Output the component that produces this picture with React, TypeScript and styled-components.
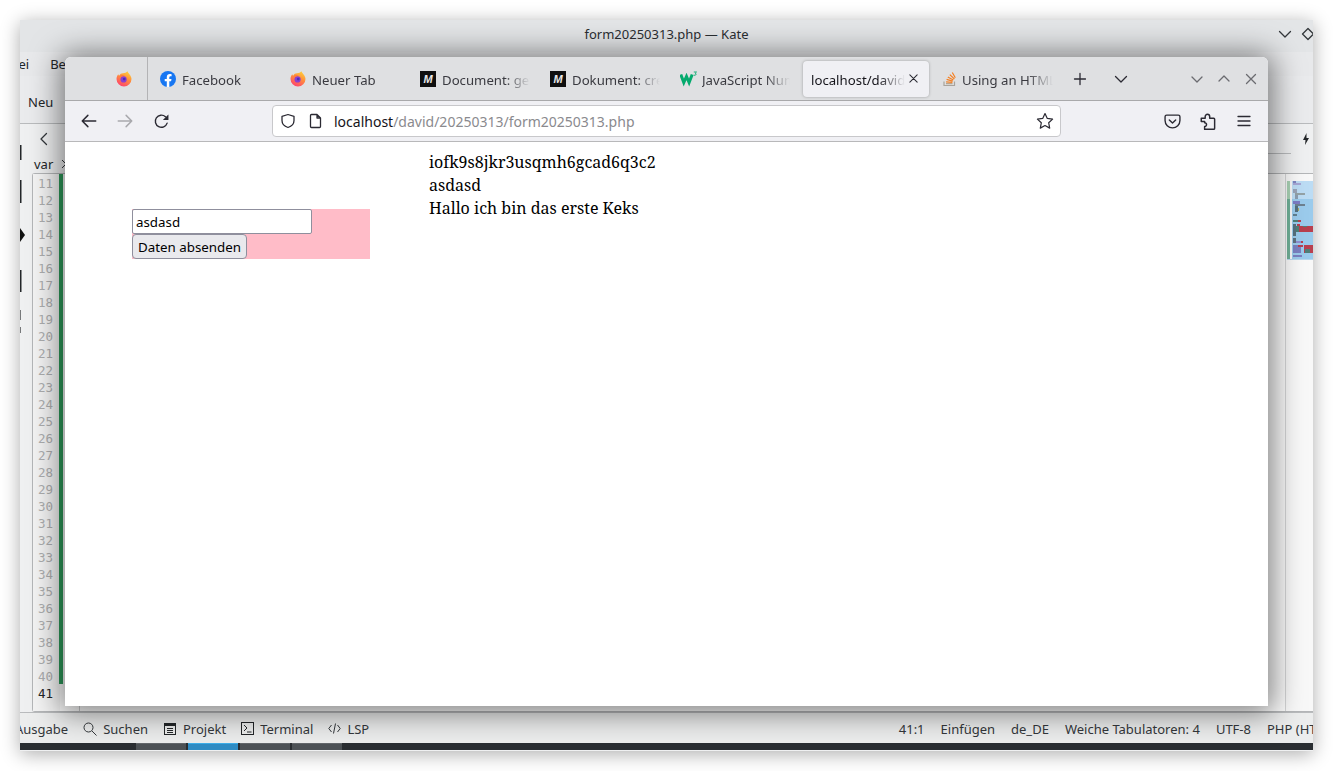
import React from 'react';
import styled, { createGlobalStyle } from 'styled-components';

const GlobalStyle = createGlobalStyle`
  html, body {
    margin: 0;
    padding: 0;
    background: #ffffff;
  }
  * {
    box-sizing: border-box;
  }
`;

// Desktop holds two free floating windows
const Desktop = styled.div`
  position: relative;
  width: 1333px;
  height: 771px;
  overflow: hidden;
  background: #ffffff;
  font-family: 'Noto Sans', 'Open Sans', sans-serif;
`;

const KateWindow = styled.div`
  position: absolute;
  left: 20px;
  top: 20px;
  width: 1293px;
  height: 731px;
  display: flex;
  flex-direction: column;
  overflow: hidden;
  background: #eff0f1;
  color: #232629;
  font-size: 13px;
  box-shadow: 0 3px 18px rgba(0, 0, 0, 0.33);
`;

const KateTitleBar = styled.div`
  position: relative;
  flex: 0 0 32px;
  display: flex;
  align-items: center;
  justify-content: center;
  padding-bottom: 4px;
  background: #e3e5e7;
  color: #2a2e32;
`;

const KateControls = styled.div`
  position: absolute;
  right: -3px;
  top: 6px;
  display: flex;
  gap: 7px;
  align-items: center;
`;

const KateMenu = styled.div`
  flex: 0 0 24px;
  display: flex;
  align-items: center;
  gap: 21px;
  margin-left: -23px;
  background: #e8e9eb;
  white-space: nowrap;
`;

const KateToolbar = styled.div`
  flex: 0 0 48px;
  display: flex;
  align-items: center;
  padding: 4px 0 0 8px;
  background: #eaebed;
  border-bottom: 1px solid #b9bbbd;
`;

const KateTabStrip = styled.div`
  flex: 0 0 30px;
  display: flex;
  align-items: center;
  justify-content: space-between;
  padding: 0 3px 0 16px;
  border-bottom: 1px solid transparent;
  position: relative;
`;

const StripLine = styled.div`
  position: absolute;
  right: 22px;
  bottom: -1px;
  width: 30px;
  height: 1px;
  background: #b9bbbd;
`;

const Crumbs = styled.div`
  flex: 0 0 19px;
  display: flex;
  align-items: center;
  gap: 8px;
  padding-left: 14px;
  font-size: 13px;
`;

const EditorFrame = styled.div`
  flex: 0 0 539px;
  display: flex;
  margin-left: 12px;
  border: 1px solid #b4b6b8;
  border-right: none;
  border-radius: 3px 0 0 3px;
  background: #fcfcfc;
`;

const Gutter = styled.div`
  width: 27px;
  padding-top: 1px;
  background: #f4f4f4;
  font-family: 'DejaVu Sans Mono', 'Liberation Mono', monospace;
  font-size: 12.5px;
`;

const LineNo = styled.div<{ $current?: boolean }>`
  height: 17px;
  line-height: 17px;
  padding-left: 5px;
  color: ${({ $current }) => ($current ? '#232629' : '#adaeaf')};
`;

const ChangeBar = styled.div`
  width: 4px;
  height: 510px;
  margin-left: -1px;
  background: #2e9a5a;
`;

const CodeArea = styled.div`
  flex: 1;
  margin-left: 16px;
  border-left: 1px solid #c9cacb;
`;

const MiniMap = styled.div`
  width: 28px;
  border-left: 1px solid #d4d5d6;
  padding: 7px 0 0 1px;
  background: #f8f8f8;
`;

const KateStatus = styled.div`
  flex: 0 0 31px;
  display: flex;
  align-items: center;
  overflow: hidden;
  padding-top: 1px;
  border-top: 1px solid #b9bbbd;
  background: #eceded;
  white-space: nowrap;
`;

const StatusButton = styled.div`
  display: flex;
  align-items: center;
  gap: 6px;
  margin-right: 15px;
  color: #33373b;
`;

const StatusStart = styled.div`
  display: flex;
  align-items: center;
  margin-left: -5px;
`;

const StatusEnd = styled.div`
  display: flex;
  align-items: center;
  gap: 16px;
  margin-left: auto;
  margin-right: -26px;
  color: #33373b;
`;

const TaskStrip = styled.div`
  flex: 0 0 7px;
  display: flex;
  gap: 2px;
  padding-left: 116px;
  background: #2a2e32;
`;

const TaskItem = styled.div<{ $active?: boolean }>`
  width: 50px;
  background: ${({ $active }) => ($active ? '#2f8cc4' : '#4d5256')};
  border-top: 1px solid ${({ $active }) => ($active ? '#3daee9' : '#63676b')};
`;

const SideMarks = styled.svg`
  position: absolute;
  left: 0;
  top: 125px;
`;

const BrowserWindow = styled.div`
  position: absolute;
  left: 65px;
  top: 57px;
  width: 1203px;
  height: 649px;
  display: flex;
  flex-direction: column;
  overflow: hidden;
  border-radius: 6px 6px 0 0;
  background: #ffffff;
  box-shadow: 0 2px 30px 5px rgba(0, 0, 0, 0.5);
`;

const TabBar = styled.div`
  flex: 0 0 44px;
  display: flex;
  align-items: center;
  background: #dfe0e2;
  border-bottom: 1px solid #a9a9ab;
`;

const PinnedTab = styled.div`
  width: 83px;
  height: 43px;
  display: flex;
  align-items: center;
  justify-content: flex-end;
  padding-right: 15px;
  border-right: 1px solid #b3b3b5;
  margin-right: 2px;
`;

const Tab = styled.div<{ $active?: boolean }>`
  width: ${({ $active }) => ($active ? '126px' : '130px')};
  height: 36px;
  margin: ${({ $active }) => ($active ? '0 4px 0 3px' : '0')};
  padding: ${({ $active }) => ($active ? '0 9px 0 8px' : '0 10px')};
  display: flex;
  align-items: center;
  gap: ${({ $active }) => ($active ? '2px' : '6px')};
  font-size: 13.2px;
  color: ${({ $active }) => ($active ? '#15141a' : '#3a3a40')};
  background: ${({ $active }) => ($active ? '#f0f0f4' : 'transparent')};
  border-radius: 4px;
  box-shadow: ${({ $active }) => ($active ? '0 0 3px rgba(0, 0, 0, 0.3)' : 'none')};
`;

const TabTitle = styled.span`
  flex: 1;
  padding-top: 2px;
  overflow: hidden;
  white-space: nowrap;
  mask-image: linear-gradient(to right, #000 72%, transparent 100%);
`;

const MediumIcon = styled.span`
  flex: 0 0 16px;
  height: 16px;
  display: flex;
  align-items: center;
  justify-content: center;
  background: #101010;
  color: #e8e8e8;
  font-family: 'Liberation Sans', sans-serif;
  font-size: 11px;
  font-weight: 700;
  font-style: italic;
`;

const TabBarButton = styled.div<{ $gap?: number }>`
  width: 34px;
  height: 34px;
  margin-left: ${({ $gap }) => $gap ?? 0}px;
  display: flex;
  align-items: center;
  justify-content: center;
`;

const WindowControls = styled.div`
  margin-left: auto;
  padding-right: 4px;
  display: flex;
`;

const WindowButton = styled.div`
  width: 27px;
  display: flex;
  justify-content: center;
`;

const NavBar = styled.div`
  flex: 0 0 41px;
  display: flex;
  align-items: center;
  padding: 0 6px;
  background: #f0f0f4;
  border-bottom: 1px solid #b8b8ba;
`;

const NavButton = styled.div`
  width: 36px;
  height: 32px;
  display: flex;
  align-items: center;
  justify-content: center;
`;

const UrlBar = styled.div`
  flex: 1;
  height: 32px;
  margin: 0 93px;
  padding: 0 6px 0 7px;
  display: flex;
  align-items: center;
  background: #ffffff;
  border: 1px solid #c8c8cb;
  border-radius: 4px;
  font-size: 14px;
  color: #15141a;
`;

const UrlIconGap = styled.span`
  width: 12px;
`;

const UrlText = styled.span`
  flex: 1;
  margin-left: 10px;
`;

const UrlPath = styled.span`
  color: #8a8a8e;
`;

const PageBody = styled.div`
  flex: 1;
  display: flex;
  align-items: flex-start;
  padding-left: 67px;
  gap: 59px;
  color: #000000;
`;

const LoginForm = styled.form`
  width: 238px;
  height: 50px;
  margin-top: 67px;
  display: flex;
  flex-direction: column;
  align-items: flex-start;
  background: #ffbcc8;
`;

const NameInput = styled.input`
  width: 180px;
  height: 25px;
  padding: 0 3px;
  border: 1px solid #8f8f9d;
  border-radius: 2px;
  background: #ffffff;
  color: #000000;
  font-family: 'Noto Sans', sans-serif;
  font-size: 13.33px;
  outline: none;
`;

const SubmitButton = styled.button`
  width: 115px;
  height: 25px;
  padding: 0;
  border: 1px solid #8f8f9d;
  border-radius: 4px;
  background: #e9e9ed;
  color: #000000;
  font-family: 'Noto Sans', sans-serif;
  font-size: 13.33px;
`;

const Output = styled.div`
  padding-top: 9px;
  font-family: 'Noto Serif', 'DejaVu Serif', serif;
  font-size: 16px;
  line-height: 23px;
`;

const FirefoxIcon = () => (
  <svg width="16" height="16" viewBox="0 0 16 16" style={{ flex: '0 0 16px' }}>
    <defs>
      <linearGradient id="ffx" x1="0.8" y1="0" x2="0.3" y2="1">
        <stop offset="0" stopColor="#ffd23a" />
        <stop offset="0.45" stopColor="#ff8f3c" />
        <stop offset="1" stopColor="#ff4070" />
      </linearGradient>
    </defs>
    <path d="M11.500 .3c.2 1.300 1.100 1.800 2.100 3.200 1 1.400 1.900 2.800 1.900 4.500a7.500 7.500 0 0 1-15 0c0-1.800.7-3.500 1.800-4.700.1.700.4 1.100.8 1.400C4 3 5.400 2.200 7 2.200c1.700 0 3.500-.6 4.500-1.900z" fill="url(#ffx)" />
    <circle cx="7.600" cy="8.400" r="3.100" fill="#8a3fd0" />
    <circle cx="8.200" cy="8.100" r="1.400" fill="#4a30b8" />
    <path d="M3.500 5c1.500-.8 3.800-1.300 5.500-.5-1.800 0-3 .6-3.700 1.800z" fill="#ff7a3c" />
  </svg>
);

const FacebookIcon = () => (
  <svg width="16" height="16" viewBox="0 0 16 16" style={{ flex: '0 0 16px' }}>
    <circle cx="8" cy="8" r="8" fill="#1877f2" />
    <path d="M11.100 10.300l.4-2.300H9.300V6.500c0-.6.300-1.200 1.300-1.200h1V3.300s-.9-.2-1.800-.2C8 3.100 6.800 4.300 6.800 6.300V8H4.700v2.300h2.100V16h2.500v-5.700z" fill="#ffffff" />
  </svg>
);

const W3Icon = () => (
  <svg width="18" height="16" viewBox="0 0 18 16" style={{ flex: '0 0 18px', marginRight: -2 }}>
    <path d="M.8 3.500l3 8 2.700-6 2.600 6 3.100-8" fill="none" stroke="#04aa6d" strokeWidth="3" />
    <path d="M13.800 1h2.700l-1.300 1.300c1 0 1.300 1.700-.2 2l-1.200-.2" fill="none" stroke="#04aa6d" strokeWidth=".9" />
  </svg>
);

const StackIcon = () => (
  <svg width="13" height="16" viewBox="1 0 13 16" style={{ flex: '0 0 13px' }}>
    <path d="M2 10.500v4h10.500v-4" fill="none" stroke="#a8a39c" strokeWidth="1.200" />
    <path d="M4 12.700h6.500" stroke="#b9a48a" strokeWidth="1.200" />
    <path d="M4.100 10.800l6.300.6M4.600 8.400l6.100 1.800M5.800 5.900l5.500 3.100M7.800 3.600l4.600 4.400M10.300 1.500l3 5.300" stroke="#f48024" strokeWidth="1.200" fill="none" />
  </svg>
);

type GlyphProps = { size?: number; color?: string; children: React.ReactNode };

const Glyph = ({ size = 16, color = '#2b2a33', children }: GlyphProps) => (
  <svg width={size} height={size} viewBox="0 0 16 16" fill="none" stroke={color} strokeWidth="1.300" strokeLinecap="round" strokeLinejoin="round" style={{ flex: `0 0 ${size}px` }}>
    {children}
  </svg>
);

const CloseGlyph = ({ color, size = 16 }: { color?: string; size?: number }) => (
  <Glyph size={size} color={color}>
    <path d="M3.500 3.500l9 9M12.500 3.500l-9 9" />
  </Glyph>
);

// x, y, width, height, fill of the code blocks in the minimap
const minimapRows: [number, number, number, number, string][] = [
  [6, 0, 3, 2, '#7f86c0'], [6, 2, 8, 2, '#a6a6d4'], [6, 8, 4, 4, '#9aa4b8'], [8, 12, 10, 2, '#94a2a6'],
  [8, 14, 3, 4, '#8c9db0'], [6, 20, 7, 3, '#7c7cc4'], [8, 23, 10, 2, '#6d8090'], [8, 25, 3, 6, '#55707e'],
  [11, 27, 1, 3, '#a9a860'], [6, 33, 4, 2, '#5f7f90'], [6, 39, 5, 2, '#4f8078'], [11, 39, 3, 2, '#b8404f'],
  [6, 43, 3, 12, '#55707e'], [10, 43, 3, 2, '#b8404f'], [9, 45, 3, 6, '#4f8078'], [12, 45, 15, 6, '#b8404f'],
  [16, 45, 4, 1, '#4f8078'], [6, 57, 3, 5, '#5f7080'], [9, 60, 5, 2, '#8f8fd0'], [14, 60, 2, 2, '#b8404f'],
  [6, 64, 5, 2, '#7a80c0'], [11, 64, 5, 2, '#b8404f'], [6, 66, 8, 6, '#7a80c0'], [17, 64, 10, 8, '#b8404f'],
  [18, 68, 5, 4, '#4f8078'], [6, 74, 9, 2, '#7a80c0'],
];

const lineNumbers = Array.from({ length: 31 }, (_, i) => i + 11);

const tabs = [
  { title: 'Facebook', icon: <FacebookIcon /> },
  { title: 'Neuer Tab', icon: <FirefoxIcon /> },
  { title: 'Document: getElementById', icon: <MediumIcon>M</MediumIcon> },
  { title: 'Dokument: createElement', icon: <MediumIcon>M</MediumIcon> },
  { title: 'JavaScript Number', icon: <W3Icon /> },
];

const App = () => {
  return (
    <Desktop>
      <GlobalStyle />
      <KateWindow>
        <KateTitleBar>
          form20250313.php — Kate
          <KateControls>
            <Glyph color="#33373b"><path d="M2.500 5.500L8 11l5.500-5.500" /></Glyph>
            <Glyph color="#33373b"><path d="M8 2.500L13.500 8 8 13.500 2.500 8z" /></Glyph>
          </KateControls>
        </KateTitleBar>
        <KateMenu>
          <span>Datei</span>
          <span>Bearbeiten</span>
        </KateMenu>
        <KateToolbar>Neu</KateToolbar>
        <KateTabStrip>
          <Glyph color="#33373b"><path d="M10.500 2.500L5 8l5.500 5.500" /></Glyph>
          <svg width="8" height="12" viewBox="0 0 8 12"><path d="M4.500 0L1 7h2.500L3 12l4-7H4.500z" fill="#232629" /></svg>
          <StripLine />
        </KateTabStrip>
        <Crumbs>
          var
          <svg width="6" height="10" viewBox="0 0 6 10"><path d="M1 1l4 4-4 4" fill="none" stroke="#33373b" /></svg>
        </Crumbs>
        <EditorFrame>
          <Gutter>
            {lineNumbers.map((n) => (
              <LineNo key={n} $current={n === 41}>{n}</LineNo>
            ))}
          </Gutter>
          <ChangeBar />
          <CodeArea />
          <MiniMap>
            <svg width="27" height="81" viewBox="0 0 27 81">
              <rect x="0" y="0" width="3" height="18" fill="#a7cfb2" />
              <rect x="0" y="18" width="3" height="60" fill="#6fae96" />
              <rect x="5" y="0" width="22" height="18" fill="#bcdcf4" />
              <rect x="5" y="18" width="22" height="60" fill="#9bcbec" />
              <path d="M0 78.500h27" stroke="#b8d8ee" />
              {minimapRows.map(([x, y, w, h, fill]) => (
                <rect key={`${x}-${y}`} x={x} y={y} width={w} height={h} fill={fill} />
              ))}
            </svg>
          </MiniMap>
        </EditorFrame>
        <KateStatus>
          <StatusStart>
            <StatusButton>Ausgabe</StatusButton>
            <StatusButton>
              <svg width="14" height="14" viewBox="0 0 14 14" fill="none" stroke="#33373b"><circle cx="5.500" cy="5.500" r="4.500" /><path d="M9 9l4.500 4.500" /></svg>
              Suchen
            </StatusButton>
            <StatusButton>
              <svg width="14" height="14" viewBox="0 0 14 14" fill="none" stroke="#232629"><rect x="1.500" y="1.500" width="11" height="11" /><path d="M1.500 3h11" strokeWidth="2" /><path d="M4 6.500h6M4 8.500h6M4 10.500h6" /></svg>
              Projekt
            </StatusButton>
            <StatusButton>
              <svg width="13" height="13" viewBox="0 0 13 13" fill="none" stroke="#232629"><rect x=".5" y=".5" width="12" height="12" /><path d="M3 3l3 3-3 3M6 10h4.500" /></svg>
              Terminal
            </StatusButton>
            <StatusButton>
              <svg width="13" height="13" viewBox="0 0 13 13" fill="none" stroke="#33373b"><path d="M3.500 3L.8 6.500 3.500 10M9.500 3l2.700 3.500L9.500 10M7.500 1.500l-2 10" /></svg>
              LSP
            </StatusButton>
          </StatusStart>
          <StatusEnd>
            <span>41:1</span>
            <span>Einfügen</span>
            <span>de_DE</span>
            <span>Weiche Tabulatoren: 4</span>
            <span>UTF-8</span>
            <span>PHP (HTML)</span>
          </StatusEnd>
        </KateStatus>
        <TaskStrip>
          <TaskItem />
          <TaskItem $active />
          <TaskItem />
          <TaskItem />
        </TaskStrip>
        <SideMarks width="6" height="220" viewBox="0 0 6 220">
          <rect x="0" y="0" width="1.500" height="15" fill="#232629" />
          <rect x="0" y="35" width="1.500" height="23" fill="#232629" />
          <path d="M0 83l5 7-5 7z" fill="#111" />
          <rect x="0" y="125" width="1.500" height="22" fill="#232629" />
          <rect x="0" y="165" width="1" height="10" fill="#77797b" />
          <rect x="0" y="182" width="1" height="6" fill="#77797b" />
        </SideMarks>
      </KateWindow>

      <BrowserWindow>
        <TabBar>
          <PinnedTab><FirefoxIcon /></PinnedTab>
          {tabs.map((tab) => (
            <Tab key={tab.title}>
              {tab.icon}
              <TabTitle>{tab.title}</TabTitle>
            </Tab>
          ))}
          <Tab $active>
            <TabTitle>localhost/david/20250313/form20250313.php</TabTitle>
            <CloseGlyph color="#2b2a33" size={13} />
          </Tab>
          <Tab>
            <StackIcon />
            <TabTitle>Using an HTML form</TabTitle>
          </Tab>
          <TabBarButton>
            <Glyph><path d="M8 2.500v11M2.500 8h11" /></Glyph>
          </TabBarButton>
          <TabBarButton $gap={7}>
            <Glyph><path d="M2.500 5.500L8 11l5.500-5.500" /></Glyph>
          </TabBarButton>
          <WindowControls>
            <WindowButton><Glyph color="#6b6b70"><path d="M3 6l5 5 5-5" /></Glyph></WindowButton>
            <WindowButton><Glyph color="#6b6b70"><path d="M3 10l5-5 5 5" /></Glyph></WindowButton>
            <WindowButton><CloseGlyph color="#6b6b70" /></WindowButton>
          </WindowControls>
        </TabBar>
        <NavBar>
          <NavButton>
            <Glyph size={18}><path d="M14 8H2M7 3L2 8l5 5" /></Glyph>
          </NavButton>
          <NavButton>
            <Glyph size={18} color="#a9a9ad"><path d="M2 8h12M9 3l5 5-5 5" /></Glyph>
          </NavButton>
          <NavButton>
            <svg width="17" height="17" viewBox="0 0 16 16" fill="none">
              <path d="M13.300 9.500A5.700 5.700 0 1 1 11.700 3.500" stroke="#2b2a33" strokeWidth="1.300" strokeLinecap="round" />
              <path d="M14.500 1.500v5.200H9.300z" fill="#2b2a33" />
            </svg>
          </NavButton>
          <UrlBar>
            <Glyph><path d="M8 1.500l6 1.800v4.200c0 3.400-2.600 5.900-6 7-3.400-1.100-6-3.600-6-7V3.300z" /></Glyph>
            <UrlIconGap />
            <Glyph><path d="M3.500 1.500h5.500l3.500 3.500v8.500a1 1 0 0 1-1 1h-8a1 1 0 0 1-1-1v-11a1 1 0 0 1 1-1zM9 1.500V5h3.500" /></Glyph>
            <UrlText>localhost<UrlPath>/david/20250313/form20250313.php</UrlPath></UrlText>
            <svg width="18" height="18" viewBox="0 0 18 18" fill="none" stroke="#2b2a33" strokeWidth="1.200" strokeLinejoin="round">
              <path d="M9 1.500l2.300 4.900 5.300.7-3.900 3.700 1 5.300L9 13.500l-4.700 2.600 1-5.300-3.900-3.700 5.300-.7z" />
            </svg>
          </UrlBar>
          <NavButton>
            <Glyph size={17}>
              <path d="M2.500 2h11A1.500 1.500 0 0 1 15 3.500V7a7 7 0 0 1-14 0V3.500A1.500 1.500 0 0 1 2.500 2z" />
              <path d="M5 6.500l3 3 3-3" />
            </Glyph>
          </NavButton>
          <NavButton>
            <Glyph size={18}>
              <path d="M2 5.500h3.500V4a2 2 0 1 1 4 0v1.500h3.500a1 1 0 0 1 .9 1v8a.9.900 0 0 1-.9.900H5v-2.500a1.700 1.700 0 1 0 0-3.400V8.500H2z" />
            </Glyph>
          </NavButton>
          <NavButton>
            <Glyph size={16}><path d="M2 3.500h12M2 8h12M2 12.500h12" /></Glyph>
          </NavButton>
        </NavBar>
        <PageBody>
          <LoginForm>
            <NameInput defaultValue="asdasd" />
            <SubmitButton type="button">Daten absenden</SubmitButton>
          </LoginForm>
          <Output>
            <div>iofk9s8jkr3usqmh6gcad6q3c2</div>
            <div>asdasd</div>
            <div>Hallo ich bin das erste Keks</div>
          </Output>
        </PageBody>
      </BrowserWindow>
    </Desktop>
  );
};

export default App;
